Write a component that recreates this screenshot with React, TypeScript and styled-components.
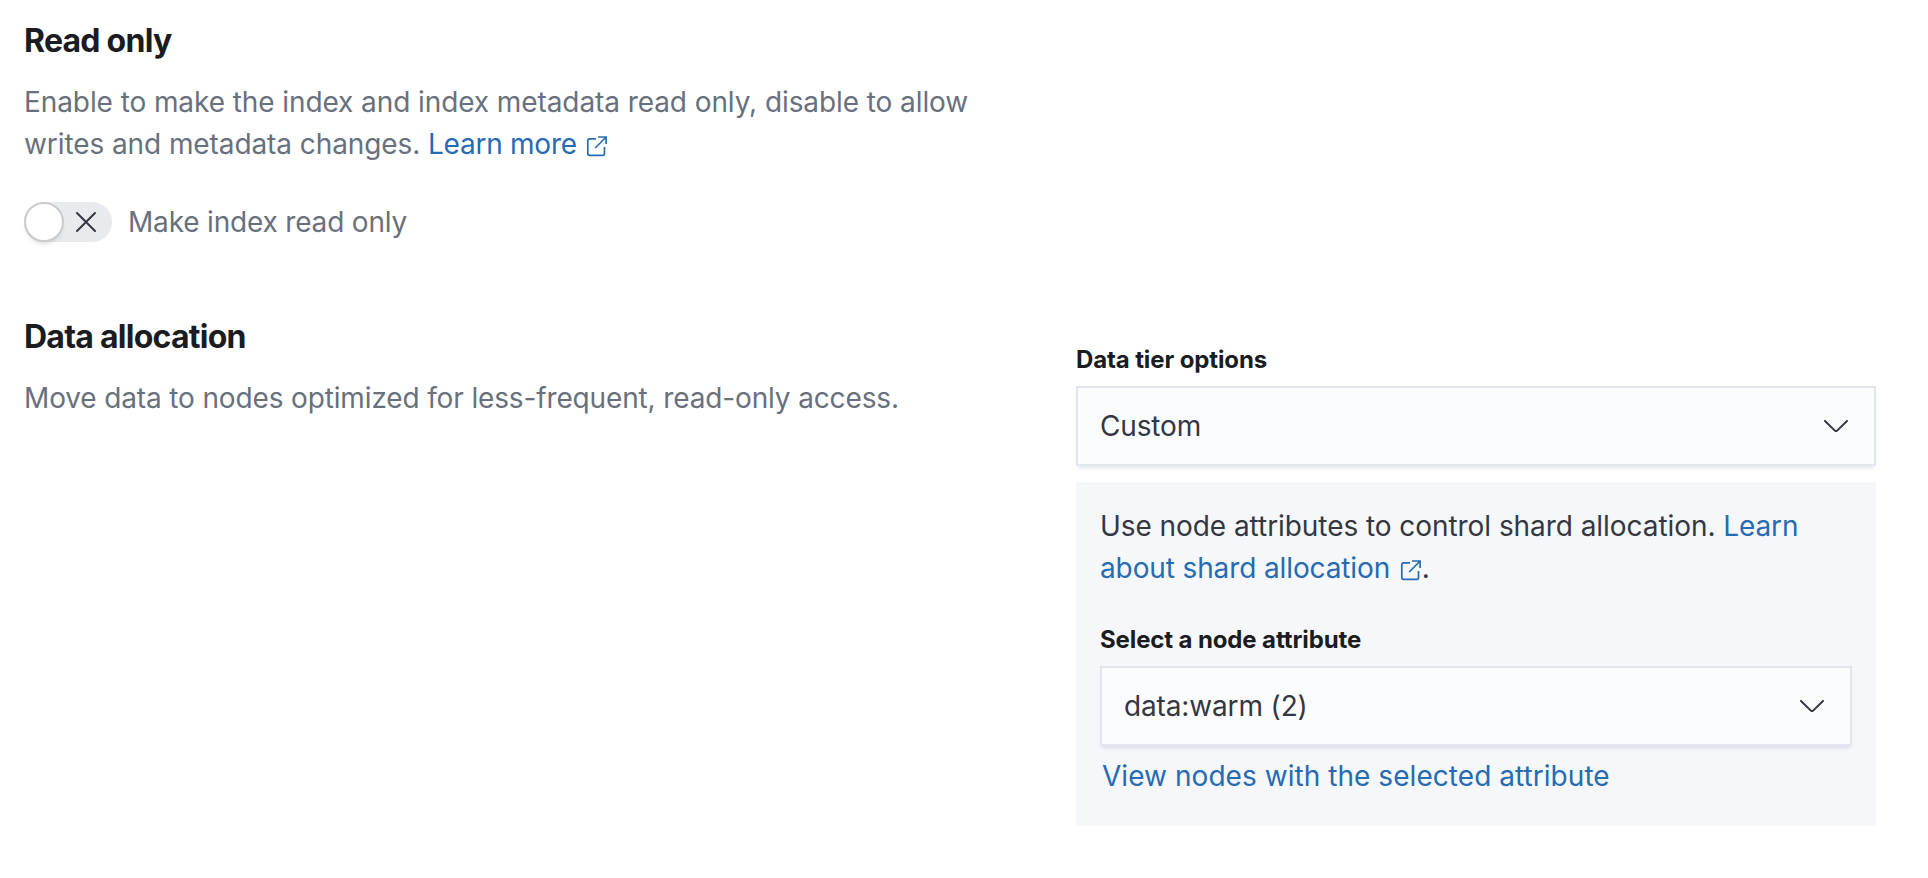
import React from 'react';
import styled, { createGlobalStyle } from 'styled-components';

const GlobalStyle = createGlobalStyle`
  body { margin: 0; background: #fff; }
  *, *::before, *::after { box-sizing: border-box; }
`;

const Page = styled.main`
  display: flex;
  flex-direction: column;
  padding: 21px 52px 0 24px;
  font-family: Inter, sans-serif;
  font-size: 28px;
  line-height: 42px;
  letter-spacing: -0.14px;
  color: #343741;
`;

const Section = styled.section`
  display: grid;
  grid-template-columns: 1020px 800px;
  column-gap: 32px;
  & + & { margin-top: 75px; }
`;

const Description = styled.div`
  display: flex;
  flex-direction: column;
  align-items: flex-start;
`;

const Title = styled.h3`
  margin: 0 0 20px;
  font-size: 32px;
  line-height: 40px;
  font-weight: 650;
  letter-spacing: -0.75px;
  color: #1a1c21;
`;

const Text = styled.p<{ $subdued?: boolean; $tracking?: number }>`
  margin: 0;
  white-space: nowrap;
  letter-spacing: ${(p) => p.$tracking ?? -0.14}px;
  color: ${(p) => (p.$subdued ? '#69707d' : '#343741')};
`;

const Link = styled.a<{ $tracking?: number }>`
  color: #266bb3;
  text-decoration: none;
  ${(p) => p.$tracking !== undefined && `letter-spacing: ${p.$tracking}px;`}
`;

const ExternalGlyph = styled.svg`
  width: 24px;
  height: 24px;
  vertical-align: -4px;
`;

const SwitchRow = styled.label`
  display: flex;
  align-items: center;
  gap: 16px;
  margin-top: 37px;
  height: 40px;
  letter-spacing: -0.18px;
  color: #69707d;
`;

const Track = styled.span`
  display: flex;
  align-items: center;
  width: 88px;
  height: 40px;
  border-radius: 20px;
  background: #e9eaee;
`;

const Thumb = styled.span`
  width: 40px;
  height: 40px;
  border: 2px solid #c9cbcd;
  border-radius: 50%;
  background: #fff;
  box-shadow: 0 4px 4px -2px rgba(0, 0, 0, 0.12);
`;

const Cross = styled.svg`
  width: 22px;
  height: 22px;
  margin-left: 11px;
`;

const Field = styled.div`
  display: flex;
  flex-direction: column;
`;

const FieldLabel = styled.span`
  margin-bottom: 8px;
  font-size: 24px;
  line-height: 36px;
  font-weight: 650;
  letter-spacing: -0.12px;
  color: #1a1c21;
`;

const SelectBox = styled.div`
  display: flex;
  align-items: center;
  justify-content: space-between;
  height: 80px;
  padding: 0 26px 0 22px;
  border: 2px solid #e3e6ef;
  background: #fbfcfe;
  box-shadow: 0 4px 4px -2px rgba(152, 162, 179, 0.3);
`;

const Chevron = styled.svg`
  width: 24px;
  height: 12px;
`;

const Controls = styled.div`
  padding-top: 25px;
`;

const Panel = styled.div`
  display: flex;
  flex-direction: column;
  margin-top: 16px;
  height: 344px;
  padding: 23px 24px 24px;
  background: #f5f7fb;
`;

const PanelField = styled(Field)`
  margin-top: 33px;
`;

const NodesLink = styled(Link)`
  margin: 9px 0 0 2px;
  letter-spacing: 0.05px;
`;

const ExternalIcon = () => (
  <ExternalGlyph viewBox="0 0 24 24" fill="none" stroke="#266bb3" strokeWidth="1.7">
    <path d="M12 4.8H5.6A1.8 1.8 0 0 0 3.8 6.6v13a1.8 1.8 0 0 0 1.8 1.8h13.1a1.8 1.8 0 0 0 1.8-1.8V13M14 3h8.1V10M22.1 3L11.2 14" />
  </ExternalGlyph>
);

const Select = ({ value }: { value: string }) => (
  <SelectBox>
    <span>{value}</span>
    <Chevron viewBox="0 0 24 12" fill="none" stroke="#343741" strokeWidth="2" strokeLinecap="round" strokeLinejoin="round">
      <path d="M1 1L10.6 10.4a2 2 0 0 0 2.8 0L23 1" />
    </Chevron>
  </SelectBox>
);

export default function App() {
  return (
    <>
      <GlobalStyle />
      <Page>
        <Section>
          <Description>
            <Title>Read only</Title>
            <Text $subdued $tracking={-0.085}>
              Enable to make the index and index metadata read only, disable to allow
              <br />
              writes and metadata changes. <Link $tracking={-0.25}>Learn more <ExternalIcon /></Link>
            </Text>
            <SwitchRow>
              <Track>
                <Thumb />
                <Cross viewBox="0 0 22 22" stroke="#343741" strokeWidth="2" strokeLinecap="round">
                  <path d="M2 2L20 20M20 2L2 20" />
                </Cross>
              </Track>
              <span>Make index read only</span>
            </SwitchRow>
          </Description>
        </Section>
        <Section>
          <Description>
            <Title>Data allocation</Title>
            <Text $subdued>Move data to nodes optimized for less-frequent, read-only access.</Text>
          </Description>
          <Controls>
            <Field>
              <FieldLabel>Data tier options</FieldLabel>
              <Select value="Custom" />
            </Field>
            <Panel>
              <Text $tracking={-0.06}>
                Use node attributes to control shard allocation. <Link $tracking={-0.12}>Learn<br />about shard allocation <ExternalIcon /></Link>.
              </Text>
              <PanelField>
                <FieldLabel>Select a node attribute</FieldLabel>
                <Select value="data:warm (2)" />
              </PanelField>
              <NodesLink>View nodes with the selected attribute</NodesLink>
            </Panel>
          </Controls>
        </Section>
      </Page>
    </>
  );
}
